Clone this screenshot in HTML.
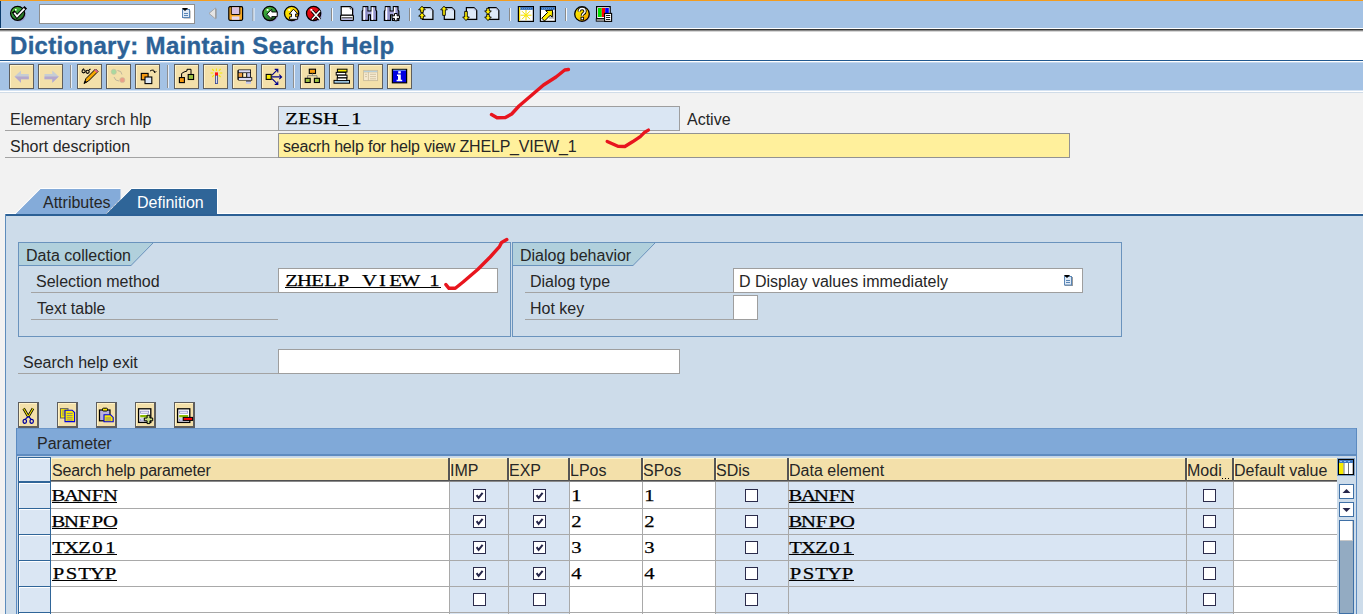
<!DOCTYPE html><html><head><meta charset="utf-8"><style>
*{margin:0;padding:0;box-sizing:border-box}
html,body{width:1363px;height:614px;overflow:hidden;background:#f2f2f2;position:relative}
.a{position:absolute}
.t{font:16px "Liberation Sans",sans-serif;line-height:20px;white-space:pre;color:#262626}
.ttl{font:bold 24px "Liberation Sans",sans-serif;line-height:30px;white-space:pre;color:#2c6297;letter-spacing:0.3px;-webkit-text-stroke:0.35px #2c6297}
.m{font:17.2px "Liberation Serif",serif;line-height:20px;white-space:pre;color:#000;-webkit-text-stroke:0.25px #000}
.m i{font-style:normal;display:inline-block;width:13px;text-align:center;transform:scaleX(1.2)}
</style></head><body><div class="a" style="left:0px;top:0px;width:1363px;height:1px;background:#f39c1e"></div>
<div class="a" style="left:0px;top:1px;width:1363px;height:27px;background:#a4c2e4"></div>
<div class="a" style="left:0px;top:1px;width:1px;height:28px;background:#0a3a6a"></div>
<div class="a" style="left:0px;top:28px;width:1363px;height:1px;background:#ffffff"></div>
<div class="a" style="left:0px;top:29px;width:1363px;height:1px;background:#333333"></div>
<div class="a" style="left:0px;top:30px;width:1363px;height:1px;background:#8a8a8a"></div>
<div class="a" style="left:0px;top:31px;width:1363px;height:1px;background:#d6d6d6"></div>
<div class="a" style="left:0px;top:32px;width:1363px;height:28px;background:#ffffff"></div>
<div class="a" style="left:39px;top:4px;width:156px;height:20px;background:#fff;border:1px solid #8f8f8f;"></div>
<div class="a ttl" style="left:10px;top:31px">Dictionary: Maintain Search Help</div>
<div class="a" style="left:0px;top:60px;width:1363px;height:1px;background:#22598f"></div>
<div class="a" style="left:0px;top:61px;width:1363px;height:1px;background:#ffffff"></div>
<div class="a" style="left:0px;top:62px;width:1363px;height:1px;background:#c2d6ee"></div>
<div class="a" style="left:0px;top:63px;width:1363px;height:27px;background:#a4c2e4"></div>
<div class="a" style="left:0px;top:90px;width:1363px;height:1px;background:#d4e2f2"></div>
<div class="a" style="left:0px;top:91px;width:1363px;height:1px;background:#ffffff"></div>
<div class="a" style="left:0px;top:92px;width:1363px;height:1px;background:#d0dce8"></div>
<div class="a" style="left:9px;top:64px;width:25px;height:25px;background:#f3e0aa;border:1px solid #5e5e5e;box-shadow:inset 1px 1px 0 #fff3c8"></div>
<div class="a" style="left:38px;top:64px;width:25px;height:25px;background:#f3e0aa;border:1px solid #5e5e5e;box-shadow:inset 1px 1px 0 #fff3c8"></div>
<div class="a" style="left:77px;top:64px;width:25px;height:25px;background:#f3e0aa;border:1px solid #5e5e5e;box-shadow:inset 1px 1px 0 #fff3c8"></div>
<div class="a" style="left:106px;top:64px;width:25px;height:25px;background:#f3e0aa;border:1px solid #5e5e5e;box-shadow:inset 1px 1px 0 #fff3c8"></div>
<div class="a" style="left:135px;top:64px;width:25px;height:25px;background:#f3e0aa;border:1px solid #5e5e5e;box-shadow:inset 1px 1px 0 #fff3c8"></div>
<div class="a" style="left:174px;top:64px;width:25px;height:25px;background:#f3e0aa;border:1px solid #5e5e5e;box-shadow:inset 1px 1px 0 #fff3c8"></div>
<div class="a" style="left:203px;top:64px;width:25px;height:25px;background:#f3e0aa;border:1px solid #5e5e5e;box-shadow:inset 1px 1px 0 #fff3c8"></div>
<div class="a" style="left:232px;top:64px;width:25px;height:25px;background:#f3e0aa;border:1px solid #5e5e5e;box-shadow:inset 1px 1px 0 #fff3c8"></div>
<div class="a" style="left:261px;top:64px;width:25px;height:25px;background:#f3e0aa;border:1px solid #5e5e5e;box-shadow:inset 1px 1px 0 #fff3c8"></div>
<div class="a" style="left:300px;top:64px;width:25px;height:25px;background:#f3e0aa;border:1px solid #5e5e5e;box-shadow:inset 1px 1px 0 #fff3c8"></div>
<div class="a" style="left:329px;top:64px;width:25px;height:25px;background:#f3e0aa;border:1px solid #5e5e5e;box-shadow:inset 1px 1px 0 #fff3c8"></div>
<div class="a" style="left:358px;top:64px;width:25px;height:25px;background:#f3e0aa;border:1px solid #5e5e5e;box-shadow:inset 1px 1px 0 #fff3c8"></div>
<div class="a" style="left:387px;top:64px;width:25px;height:25px;background:#f3e0aa;border:1px solid #5e5e5e;box-shadow:inset 1px 1px 0 #fff3c8"></div>
<div class="a" style="left:70px;top:65px;width:2px;height:23px;background:linear-gradient(90deg,#8e8e8e 50%,#e6eef8 50%)"></div>
<div class="a" style="left:167px;top:65px;width:2px;height:23px;background:linear-gradient(90deg,#8e8e8e 50%,#e6eef8 50%)"></div>
<div class="a" style="left:293px;top:65px;width:2px;height:23px;background:linear-gradient(90deg,#8e8e8e 50%,#e6eef8 50%)"></div>
<div class="a t" style="left:10px;top:110px;">Elementary srch hlp</div>
<div class="a" style="left:5px;top:130px;width:273px;height:1px;background:#a3a3a3"></div>
<div class="a" style="left:278px;top:106px;width:402px;height:25px;background:#dae6f3;border:1px solid #9e9e9e"></div>
<div class="a m" style="left:285px;top:109px;"><i>Z</i><i>E</i><i>S</i><i>H</i><i>_</i><i>1</i></div>
<div class="a t" style="left:687px;top:110px;">Active</div>
<div class="a t" style="left:10px;top:137px;">Short description</div>
<div class="a" style="left:5px;top:157px;width:273px;height:1px;background:#a3a3a3"></div>
<div class="a" style="left:278px;top:133px;width:792px;height:25px;background:#fff09c;border:1px solid #929292"></div>
<div class="a t" style="left:283px;top:137px;letter-spacing:-0.19px">seacrh help for help view ZHELP_VIEW_1</div>
<svg class="a" style="left:0;top:186px" width="230" height="30"><polygon points="15.5,28 40.5,3 120.5,3 120.5,28" fill="#84abd9"/><polyline points="14.8,28 40.2,2.5 120.5,2.5" fill="none" stroke="#fff" stroke-width="1"/><polygon points="106.5,28 131.5,3 217,3 217,28" fill="#2f6598"/><polyline points="106,28 131.2,2.5 217.5,2.5 217.5,28" fill="none" stroke="#fff" stroke-width="1"/><line x1="106" y1="28" x2="120.5" y2="13.5" stroke="#5a6f88" stroke-width="0.8" stroke-dasharray="1 1"/></svg>
<div class="a t" style="left:43px;top:193px;">Attributes</div>
<div class="a t" style="left:137px;top:193px;color:#fff">Definition</div>
<div class="a" style="left:5px;top:214px;width:1358px;height:400px;background:#cddcea"></div>
<div class="a" style="left:5px;top:213px;width:11px;height:1px;background:#fff"></div>
<div class="a" style="left:218px;top:213px;width:1145px;height:1px;background:#fff"></div>
<div class="a" style="left:5px;top:214px;width:1358px;height:2px;background:#2c6095"></div>
<div class="a" style="left:5px;top:214px;width:1px;height:400px;background:#5d8cbc"></div>
<div class="a" style="left:18px;top:242px;width:493px;height:95px;border:1px solid #6a93bd"></div>
<svg class="a" style="left:19px;top:243px" width="136" height="23"><polygon points="0,0 134,0 111.5,23 0,23" fill="#b1d0dc"/><line x1="0" y1="22.5" x2="112" y2="22.5" stroke="#6a93bd"/><line x1="111.5" y1="23" x2="134" y2="0" stroke="#6a93bd"/></svg>
<div class="a t" style="left:26px;top:246px;">Data collection</div>
<div class="a" style="left:512px;top:242px;width:610px;height:95px;border:1px solid #6a93bd"></div>
<svg class="a" style="left:513px;top:243px" width="144" height="23"><polygon points="0,0 142,0 119.5,23 0,23" fill="#b1d0dc"/><line x1="0" y1="22.5" x2="120" y2="22.5" stroke="#6a93bd"/><line x1="119.5" y1="23" x2="142" y2="0" stroke="#6a93bd"/></svg>
<div class="a t" style="left:520px;top:246px;">Dialog behavior</div>
<div class="a t" style="left:36px;top:272px;">Selection method</div>
<div class="a" style="left:31px;top:292px;width:247px;height:1px;background:#a3a3a3"></div>
<div class="a" style="left:278px;top:268px;width:220px;height:25px;background:#fff;border:1px solid #9e9e9e"></div>
<div class="a m" style="left:285px;top:271px;"><i>Z</i><i>H</i><i>E</i><i>L</i><i>P</i><i> </i><i>V</i><i>I</i><i>E</i><i>W</i><i> </i><i>1</i></div>
<div class="a" style="left:285px;top:287px;width:156px;height:1px;background:#000"></div>
<div class="a t" style="left:37px;top:299px;">Text table</div>
<div class="a" style="left:31px;top:319px;width:247px;height:1px;background:#a3a3a3"></div>
<div class="a t" style="left:530px;top:272px;">Dialog type</div>
<div class="a" style="left:525px;top:292px;width:208px;height:1px;background:#a3a3a3"></div>
<div class="a" style="left:733px;top:268px;width:350px;height:25px;background:#fff;border:1px solid #9e9e9e"></div>
<div class="a t" style="left:739px;top:272px;">D Display values immediately</div>
<div class="a t" style="left:530px;top:299px;">Hot key</div>
<div class="a" style="left:525px;top:319px;width:208px;height:1px;background:#a3a3a3"></div>
<div class="a" style="left:733px;top:295px;width:25px;height:25px;background:#fff;border:1px solid #9e9e9e"></div>
<div class="a t" style="left:23px;top:353px;">Search help exit</div>
<div class="a" style="left:18px;top:373px;width:260px;height:1px;background:#a3a3a3"></div>
<div class="a" style="left:278px;top:349px;width:402px;height:25px;background:#fff;border:1px solid #9e9e9e"></div>
<div class="a" style="left:18px;top:402px;width:21px;height:26px;background:#f3e0aa;border:1px solid #5e5e5e;border-right-width:2px;border-bottom-width:2px;box-shadow:inset 1px 1px 0 #fff3c8"></div>
<div class="a" style="left:57px;top:402px;width:21px;height:26px;background:#f3e0aa;border:1px solid #5e5e5e;border-right-width:2px;border-bottom-width:2px;box-shadow:inset 1px 1px 0 #fff3c8"></div>
<div class="a" style="left:96px;top:402px;width:21px;height:26px;background:#f3e0aa;border:1px solid #5e5e5e;border-right-width:2px;border-bottom-width:2px;box-shadow:inset 1px 1px 0 #fff3c8"></div>
<div class="a" style="left:135px;top:402px;width:21px;height:26px;background:#f3e0aa;border:1px solid #5e5e5e;border-right-width:2px;border-bottom-width:2px;box-shadow:inset 1px 1px 0 #fff3c8"></div>
<div class="a" style="left:174px;top:402px;width:21px;height:26px;background:#f3e0aa;border:1px solid #5e5e5e;border-right-width:2px;border-bottom-width:2px;box-shadow:inset 1px 1px 0 #fff3c8"></div>
<div class="a" style="left:16px;top:428px;width:1342px;height:186px;background:#cddcea"></div>
<div class="a" style="left:16px;top:428px;width:1px;height:186px;background:#5b8ac0"></div>
<div class="a" style="left:1356px;top:428px;width:1px;height:186px;background:#5b8ac0"></div>
<div class="a" style="left:17px;top:428px;width:1339px;height:27px;background:#80a9d8;border-top:1px solid #6b96c8;border-bottom:1px solid #5f8cc0"></div>
<div class="a" style="left:17px;top:455px;width:1339px;height:1px;background:#5f8cc0"></div>
<div class="a" style="left:17px;top:456px;width:1339px;height:1px;background:#c6d6e8"></div>
<div class="a t" style="left:37px;top:434px;">Parameter</div>
<div class="a" style="left:51px;top:458px;width:1286px;height:22px;background:#f3e0aa;box-shadow:inset 1px 1px 0 #fff6cc"></div>
<div class="a" style="left:51px;top:480px;width:1286px;height:1px;background:#505050"></div>
<div class="a" style="left:51px;top:481px;width:1286px;height:1px;background:#8a8a8a"></div>
<div class="a t" style="left:52px;top:461px;letter-spacing:-0.2px">Search help parameter</div>
<div class="a" style="left:448px;top:458px;width:2px;height:23px;background:#555555"></div>
<div class="a" style="left:450px;top:458px;width:1px;height:22px;background:#fff6cc"></div>
<div class="a t" style="left:450px;top:461px;">IMP</div>
<div class="a" style="left:507px;top:458px;width:2px;height:23px;background:#555555"></div>
<div class="a" style="left:509px;top:458px;width:1px;height:22px;background:#fff6cc"></div>
<div class="a t" style="left:509px;top:461px;">EXP</div>
<div class="a" style="left:568px;top:458px;width:2px;height:23px;background:#555555"></div>
<div class="a" style="left:570px;top:458px;width:1px;height:22px;background:#fff6cc"></div>
<div class="a t" style="left:570px;top:461px;">LPos</div>
<div class="a" style="left:641px;top:458px;width:2px;height:23px;background:#555555"></div>
<div class="a" style="left:643px;top:458px;width:1px;height:22px;background:#fff6cc"></div>
<div class="a t" style="left:643px;top:461px;">SPos</div>
<div class="a" style="left:714px;top:458px;width:2px;height:23px;background:#555555"></div>
<div class="a" style="left:716px;top:458px;width:1px;height:22px;background:#fff6cc"></div>
<div class="a t" style="left:716px;top:461px;">SDis</div>
<div class="a" style="left:787px;top:458px;width:2px;height:23px;background:#555555"></div>
<div class="a" style="left:789px;top:458px;width:1px;height:22px;background:#fff6cc"></div>
<div class="a t" style="left:789px;top:461px;">Data element</div>
<div class="a" style="left:1185px;top:458px;width:2px;height:23px;background:#555555"></div>
<div class="a" style="left:1187px;top:458px;width:1px;height:22px;background:#fff6cc"></div>
<div class="a t" style="left:1187px;top:461px;">Modi</div>
<div class="a" style="left:1232px;top:458px;width:2px;height:23px;background:#555555"></div>
<div class="a" style="left:1234px;top:458px;width:1px;height:22px;background:#fff6cc"></div>
<div class="a t" style="left:1234px;top:461px;">Default value</div>
<div class="a" style="left:1222px;top:478px;width:1px;height:1px;background:#000"></div>
<div class="a" style="left:1225px;top:478px;width:1px;height:1px;background:#000"></div>
<div class="a" style="left:1228px;top:478px;width:1px;height:1px;background:#000"></div>
<div class="a" style="left:18px;top:457px;width:33px;height:25px;background:#dae6f3;border:1px solid #2f6598;box-shadow:inset 1px 1px 0 #fff"></div>
<div class="a" style="left:51px;top:482px;width:398px;height:132px;background:#ffffff"></div>
<div class="a" style="left:449px;top:482px;width:59px;height:132px;background:#d9e5f3"></div>
<div class="a" style="left:449px;top:482px;width:1px;height:132px;background:#a9a9a9"></div>
<div class="a" style="left:508px;top:482px;width:61px;height:132px;background:#d9e5f3"></div>
<div class="a" style="left:508px;top:482px;width:1px;height:132px;background:#a9a9a9"></div>
<div class="a" style="left:569px;top:482px;width:73px;height:132px;background:#ffffff"></div>
<div class="a" style="left:569px;top:482px;width:1px;height:132px;background:#a9a9a9"></div>
<div class="a" style="left:642px;top:482px;width:73px;height:132px;background:#ffffff"></div>
<div class="a" style="left:642px;top:482px;width:1px;height:132px;background:#a9a9a9"></div>
<div class="a" style="left:715px;top:482px;width:73px;height:132px;background:#d9e5f3"></div>
<div class="a" style="left:715px;top:482px;width:1px;height:132px;background:#a9a9a9"></div>
<div class="a" style="left:788px;top:482px;width:398px;height:132px;background:#d9e5f3"></div>
<div class="a" style="left:788px;top:482px;width:1px;height:132px;background:#a9a9a9"></div>
<div class="a" style="left:1186px;top:482px;width:47px;height:132px;background:#d9e5f3"></div>
<div class="a" style="left:1186px;top:482px;width:1px;height:132px;background:#a9a9a9"></div>
<div class="a" style="left:1233px;top:482px;width:104px;height:132px;background:#ffffff"></div>
<div class="a" style="left:1233px;top:482px;width:1px;height:132px;background:#a9a9a9"></div>
<div class="a" style="left:51px;top:508px;width:1286px;height:1px;background:#a9a9a9"></div>
<div class="a" style="left:51px;top:534px;width:1286px;height:1px;background:#a9a9a9"></div>
<div class="a" style="left:51px;top:560px;width:1286px;height:1px;background:#a9a9a9"></div>
<div class="a" style="left:51px;top:586px;width:1286px;height:1px;background:#a9a9a9"></div>
<div class="a" style="left:51px;top:612px;width:1286px;height:1px;background:#a9a9a9"></div>
<div class="a" style="left:18px;top:482px;width:33px;height:27px;background:#dae6f3;border:1px solid #2f6598;box-shadow:inset 1px 1px 0 #fff"></div>
<div class="a m" style="left:52px;top:486px;"><i>B</i><i>A</i><i>N</i><i>F</i><i>N</i></div>
<div class="a" style="left:52px;top:502px;width:65px;height:1px;background:#000"></div>
<div class="a m" style="left:789px;top:486px;"><i>B</i><i>A</i><i>N</i><i>F</i><i>N</i></div>
<div class="a" style="left:789px;top:502px;width:65px;height:1px;background:#000"></div>
<div class="a m" style="left:570px;top:486px;"><i>1</i></div>
<div class="a m" style="left:643px;top:486px;"><i>1</i></div>
<div class="a" style="left:473px;top:489px;width:13px;height:13px;background:#fff;border:1px solid #2b2b4b"><svg width="11" height="11" style="position:absolute;left:0;top:0"><path d="M2.6 5.2 L4.6 7.8 L8.6 2.8" stroke="#26264a" stroke-width="2" fill="none"/></svg></div>
<div class="a" style="left:533px;top:489px;width:13px;height:13px;background:#fff;border:1px solid #2b2b4b"><svg width="11" height="11" style="position:absolute;left:0;top:0"><path d="M2.6 5.2 L4.6 7.8 L8.6 2.8" stroke="#26264a" stroke-width="2" fill="none"/></svg></div>
<div class="a" style="left:745px;top:489px;width:13px;height:13px;background:#fff;border:1px solid #2b2b4b"></div>
<div class="a" style="left:1203px;top:489px;width:13px;height:13px;background:#fff;border:1px solid #2b2b4b"></div>
<div class="a" style="left:18px;top:508px;width:33px;height:27px;background:#dae6f3;border:1px solid #2f6598;box-shadow:inset 1px 1px 0 #fff"></div>
<div class="a m" style="left:52px;top:512px;"><i>B</i><i>N</i><i>F</i><i>P</i><i>O</i></div>
<div class="a" style="left:52px;top:528px;width:65px;height:1px;background:#000"></div>
<div class="a m" style="left:789px;top:512px;"><i>B</i><i>N</i><i>F</i><i>P</i><i>O</i></div>
<div class="a" style="left:789px;top:528px;width:65px;height:1px;background:#000"></div>
<div class="a m" style="left:570px;top:512px;"><i>2</i></div>
<div class="a m" style="left:643px;top:512px;"><i>2</i></div>
<div class="a" style="left:473px;top:515px;width:13px;height:13px;background:#fff;border:1px solid #2b2b4b"><svg width="11" height="11" style="position:absolute;left:0;top:0"><path d="M2.6 5.2 L4.6 7.8 L8.6 2.8" stroke="#26264a" stroke-width="2" fill="none"/></svg></div>
<div class="a" style="left:533px;top:515px;width:13px;height:13px;background:#fff;border:1px solid #2b2b4b"><svg width="11" height="11" style="position:absolute;left:0;top:0"><path d="M2.6 5.2 L4.6 7.8 L8.6 2.8" stroke="#26264a" stroke-width="2" fill="none"/></svg></div>
<div class="a" style="left:745px;top:515px;width:13px;height:13px;background:#fff;border:1px solid #2b2b4b"></div>
<div class="a" style="left:1203px;top:515px;width:13px;height:13px;background:#fff;border:1px solid #2b2b4b"></div>
<div class="a" style="left:18px;top:534px;width:33px;height:27px;background:#dae6f3;border:1px solid #2f6598;box-shadow:inset 1px 1px 0 #fff"></div>
<div class="a m" style="left:52px;top:538px;"><i>T</i><i>X</i><i>Z</i><i>0</i><i>1</i></div>
<div class="a" style="left:52px;top:554px;width:65px;height:1px;background:#000"></div>
<div class="a m" style="left:789px;top:538px;"><i>T</i><i>X</i><i>Z</i><i>0</i><i>1</i></div>
<div class="a" style="left:789px;top:554px;width:65px;height:1px;background:#000"></div>
<div class="a m" style="left:570px;top:538px;"><i>3</i></div>
<div class="a m" style="left:643px;top:538px;"><i>3</i></div>
<div class="a" style="left:473px;top:541px;width:13px;height:13px;background:#fff;border:1px solid #2b2b4b"><svg width="11" height="11" style="position:absolute;left:0;top:0"><path d="M2.6 5.2 L4.6 7.8 L8.6 2.8" stroke="#26264a" stroke-width="2" fill="none"/></svg></div>
<div class="a" style="left:533px;top:541px;width:13px;height:13px;background:#fff;border:1px solid #2b2b4b"><svg width="11" height="11" style="position:absolute;left:0;top:0"><path d="M2.6 5.2 L4.6 7.8 L8.6 2.8" stroke="#26264a" stroke-width="2" fill="none"/></svg></div>
<div class="a" style="left:745px;top:541px;width:13px;height:13px;background:#fff;border:1px solid #2b2b4b"></div>
<div class="a" style="left:1203px;top:541px;width:13px;height:13px;background:#fff;border:1px solid #2b2b4b"></div>
<div class="a" style="left:18px;top:560px;width:33px;height:27px;background:#dae6f3;border:1px solid #2f6598;box-shadow:inset 1px 1px 0 #fff"></div>
<div class="a m" style="left:52px;top:564px;"><i>P</i><i>S</i><i>T</i><i>Y</i><i>P</i></div>
<div class="a" style="left:52px;top:580px;width:65px;height:1px;background:#000"></div>
<div class="a m" style="left:789px;top:564px;"><i>P</i><i>S</i><i>T</i><i>Y</i><i>P</i></div>
<div class="a" style="left:789px;top:580px;width:65px;height:1px;background:#000"></div>
<div class="a m" style="left:570px;top:564px;"><i>4</i></div>
<div class="a m" style="left:643px;top:564px;"><i>4</i></div>
<div class="a" style="left:473px;top:567px;width:13px;height:13px;background:#fff;border:1px solid #2b2b4b"><svg width="11" height="11" style="position:absolute;left:0;top:0"><path d="M2.6 5.2 L4.6 7.8 L8.6 2.8" stroke="#26264a" stroke-width="2" fill="none"/></svg></div>
<div class="a" style="left:533px;top:567px;width:13px;height:13px;background:#fff;border:1px solid #2b2b4b"><svg width="11" height="11" style="position:absolute;left:0;top:0"><path d="M2.6 5.2 L4.6 7.8 L8.6 2.8" stroke="#26264a" stroke-width="2" fill="none"/></svg></div>
<div class="a" style="left:745px;top:567px;width:13px;height:13px;background:#fff;border:1px solid #2b2b4b"></div>
<div class="a" style="left:1203px;top:567px;width:13px;height:13px;background:#fff;border:1px solid #2b2b4b"></div>
<div class="a" style="left:18px;top:586px;width:33px;height:27px;background:#dae6f3;border:1px solid #2f6598;box-shadow:inset 1px 1px 0 #fff"></div>
<div class="a" style="left:473px;top:593px;width:13px;height:13px;background:#fff;border:1px solid #2b2b4b"></div>
<div class="a" style="left:533px;top:593px;width:13px;height:13px;background:#fff;border:1px solid #2b2b4b"></div>
<div class="a" style="left:745px;top:593px;width:13px;height:13px;background:#fff;border:1px solid #2b2b4b"></div>
<div class="a" style="left:1203px;top:593px;width:13px;height:13px;background:#fff;border:1px solid #2b2b4b"></div>
<div class="a" style="left:18px;top:612px;width:33px;height:27px;background:#dae6f3;border:1px solid #2f6598;box-shadow:inset 1px 1px 0 #fff"></div>
<div class="a" style="left:473px;top:619px;width:13px;height:13px;background:#fff;border:1px solid #2b2b4b"></div>
<div class="a" style="left:533px;top:619px;width:13px;height:13px;background:#fff;border:1px solid #2b2b4b"></div>
<div class="a" style="left:745px;top:619px;width:13px;height:13px;background:#fff;border:1px solid #2b2b4b"></div>
<div class="a" style="left:1203px;top:619px;width:13px;height:13px;background:#fff;border:1px solid #2b2b4b"></div>
<div class="a" style="left:1337px;top:457px;width:19px;height:157px;background:#cddcea"></div>
<svg class="a" style="left:1337px;top:457px" width="19" height="20"><rect x="1.5" y="2.5" width="15" height="15" fill="#fff" stroke="#000" stroke-width="1"/><rect x="2" y="3" width="14" height="3" fill="#3f78c0"/><path d="M3 4.5h2M7 4.5h2M11 4.5h2" stroke="#a8d0ff" stroke-width="0.8"/><rect x="2" y="6" width="4.5" height="11" fill="#f5ea00"/><rect x="11" y="6" width="1" height="11" fill="#777"/><rect x="6.5" y="6" width="1" height="11" fill="#777"/><rect x="15" y="6" width="1" height="11" fill="#bbb"/><rect x="0.5" y="1.5" width="17" height="17" fill="none" stroke="#7a9cc4" stroke-width="1"/></svg>
<div class="a" style="left:1339px;top:484px;width:15px;height:15px;background:#fff;border:1px solid #3f70a6"></div>
<div class="a" style="left:1339px;top:502px;width:15px;height:15px;background:#fff;border:1px solid #3f70a6"></div>
<svg class="a" style="left:1339px;top:484px" width="15" height="33"><path d="M3.5 9 L7.5 5 L11.5 9 Z" fill="#26264a"/><path d="M3.5 24 L7.5 28 L11.5 24 Z" fill="#26264a"/></svg>
<div class="a" style="left:1339px;top:520px;width:15px;height:94px;background:#93abc2;border:1px solid #3f70a6"></div>
<div class="a" style="left:1340px;top:521px;width:13px;height:20px;background:#fff;border-bottom:1px solid #c8c8c8;border-right:1px solid #c8c8c8"></div>
<svg class="a" style="left:1060px;top:272px" width="16" height="16"><rect x="5" y="5" width="8" height="9" fill="#9a9a9a"/><rect x="4.5" y="4.5" width="7" height="8.5" fill="#dfeaf6" stroke="#5a86b6" stroke-width="1"/><path d="M6 8.5h4M6 10.5h4" stroke="#5a86b6" stroke-width="1"/><path d="M3.8 3 L10.2 3 L7 6 Z" fill="#000"/></svg>
<svg class="a" style="left:0;top:0" width="640" height="28" shape-rendering="geometricPrecision"><defs><linearGradient id="gG" x1="0" y1="0" x2="0.6" y2="1"><stop offset="0" stop-color="#5cc02a"/><stop offset="0.55" stop-color="#2f9a3a"/><stop offset="1" stop-color="#2a6e22"/></linearGradient><linearGradient id="gY" x1="0" y1="0" x2="1" y2="1"><stop offset="0" stop-color="#fff000"/><stop offset="0.5" stop-color="#f8d400"/><stop offset="1" stop-color="#f08a00"/></linearGradient><linearGradient id="gR" x1="0" y1="0" x2="1" y2="1"><stop offset="0" stop-color="#ff1010"/><stop offset="1" stop-color="#b80018"/></linearGradient><linearGradient id="gB" x1="0" y1="0" x2="1" y2="0"><stop offset="0" stop-color="#ffffff"/><stop offset="0.5" stop-color="#9e9ed6"/><stop offset="1" stop-color="#6a6aa0"/></linearGradient></defs><circle cx="19" cy="14.6" r="7" fill="#9c9cd2"/><circle cx="17.6" cy="13.3" r="7" fill="url(#gG)" stroke="#000" stroke-width="1.3"/><path d="M14.3 12.8 L17 16.4 L24.5 8.6" stroke="#000" stroke-width="3.6" fill="none" stroke-linecap="square"/><path d="M14.3 12.8 L17 16.4 L24.5 8.6" stroke="#fff" stroke-width="1.8" fill="none"/><rect x="15" y="9" width="1.6" height="1.6" fill="#fff"/><rect x="183.5" y="10.5" width="7" height="8" fill="#9a9a9a"/><rect x="182.5" y="9.5" width="7" height="8" fill="#dfeaf6" stroke="#5a86b6" stroke-width="1"/><path d="M184 13.5h4M184 15.5h4" stroke="#5a86b6" stroke-width="1"/><path d="M181.8 8 L188.2 8 L185 11 Z" fill="#000"/><path d="M210.5 13.5 L216.5 8.5 L216.5 18.8 Z" fill="#8a8a8a"/><path d="M209 13.4 L215.5 8 L215.5 18.9 Z" fill="#e4e4e4" stroke="#9a9a9a" stroke-width="0.8"/><rect x="228.8" y="6.7" width="13.8" height="13.6" rx="1.2" fill="#f5a623" stroke="#000" stroke-width="1.2"/><rect x="231.8" y="7.2" width="7.6" height="6.8" fill="#d8c2e2"/><rect x="231.8" y="16.4" width="7.6" height="3.4" fill="#e6d8ee"/><path d="M231.5 14.5h8.2M231.3 7v7.3M239.8 7v7.3" stroke="#000" stroke-width="0.9"/><rect x="252.5" y="8" width="1" height="13" fill="#8a8a8a"/><rect x="253.5" y="8" width="1" height="13" fill="#f4f8fc"/><rect x="331" y="8" width="1" height="13" fill="#8a8a8a"/><rect x="332" y="8" width="1" height="13" fill="#f4f8fc"/><rect x="409" y="8" width="1" height="13" fill="#8a8a8a"/><rect x="410" y="8" width="1" height="13" fill="#f4f8fc"/><rect x="509" y="8" width="1" height="13" fill="#8a8a8a"/><rect x="510" y="8" width="1" height="13" fill="#f4f8fc"/><rect x="565" y="8" width="1" height="13" fill="#8a8a8a"/><rect x="566" y="8" width="1" height="13" fill="#f4f8fc"/><circle cx="271.29999999999995" cy="14.8" r="7" fill="#9c9cd2"/><circle cx="269.9" cy="13.4" r="7.1" fill="url(#gG)" stroke="#000" stroke-width="1.3"/><rect x="266.7" y="9" width="1.8" height="1.8" fill="#fff"/><circle cx="293.0" cy="14.8" r="7" fill="#9c9cd2"/><circle cx="291.6" cy="13.4" r="7.1" fill="url(#gY)" stroke="#000" stroke-width="1.3"/><rect x="288.40000000000003" y="9" width="1.8" height="1.8" fill="#fff"/><circle cx="315.0" cy="14.8" r="7" fill="#9c9cd2"/><circle cx="313.6" cy="13.4" r="7.1" fill="url(#gR)" stroke="#000" stroke-width="1.3"/><rect x="310.40000000000003" y="9" width="1.8" height="1.8" fill="#fff"/><path d="M266.8 14.2 L271.8 9.3 L271.8 12 L277.2 12 L277.2 16.6 L271.8 16.6 L271.8 19.2 Z" fill="#fff" stroke="#000" stroke-width="0.9"/><path d="M293.5 9.2 L297.8 14 L295.6 14 L295.6 16.8 L297.6 16.8 L297.6 19.3 L289.6 19.3 L289.6 16.8 L291.5 16.8 L291.5 14 L289.3 14 Z" fill="#fff" stroke="#000" stroke-width="0.9"/><path d="M312 10.8 L320 19.5 M320 10.8 L312 19.5" stroke="#000" stroke-width="3.2"/><path d="M312 10.8 L320 19.5 M320 10.8 L312 19.5" stroke="#fff" stroke-width="1.6"/><rect x="342" y="7.5" width="12" height="14" fill="#9c9cd2" opacity="0.7"/><path d="M341.2 6.6 L350.5 6.6 L352.6 8.7 L352.6 15.5 L341.2 15.5 Z" fill="#fff" stroke="#000" stroke-width="1.2"/><path d="M350.2 6.8 L350.2 9 L352.4 9" fill="#cfd8f0" stroke="#000" stroke-width="0.6"/><rect x="340.6" y="15.2" width="12.8" height="5.2" rx="1" fill="#fff" stroke="#000" stroke-width="1.2"/><rect x="341.6" y="17.4" width="10.8" height="1.1" fill="#000"/><rect x="342" y="18.5" width="10" height="1.4" fill="#b8b8e6"/><path d="M363.2 6.6 h4.6 v4.4 h3.4 v-4.4 h4.6 v3.6 l0.8 1 v9.2 h-6.2 v-5.6 h-2 v5.6 h-6.2 v-9.2 l0.8 -1 z" fill="#a8a8dc" stroke="#000" stroke-width="1.2"/><rect x="363.4" y="7.2" width="1.5" height="12.8" fill="#fff"/><rect x="371.6" y="7.2" width="1.5" height="12.8" fill="#fff"/><rect x="366.3" y="7.2" width="1" height="12.8" fill="#7c7cb4"/><rect x="374.6" y="10.5" width="1" height="9.5" fill="#7c7cb4"/><path d="M385.4 6.6 h4.6 v4.4 h3.4 v-4.4 h4.6 v3.6 l0.8 1 v9.2 h-6.2 v-5.6 h-2 v5.6 h-6.2 v-9.2 l0.8 -1 z" fill="#a8a8dc" stroke="#000" stroke-width="1.2"/><rect x="385.59999999999997" y="7.2" width="1.5" height="12.8" fill="#fff"/><rect x="393.8" y="7.2" width="1.5" height="12.8" fill="#fff"/><rect x="388.5" y="7.2" width="1" height="12.8" fill="#7c7cb4"/><rect x="396.8" y="10.5" width="1" height="9.5" fill="#7c7cb4"/><path d="M394.5 13.5 h2.6 v2.3 h2.4 v2.6 h-2.4 v2.4 h-2.6 v-2.4 h-2.4 v-2.6 h2.4 z" fill="#fff" stroke="#000" stroke-width="1"/><path d="M423.6 8.5 h7.5 l2.6 2.6 v9.3 h-10.1 z" fill="#aaa" opacity="0.5"/><path d="M422.6 7.6 h7.5 l2.8 2.8 v9 h-10.3 z" fill="#dde9f7" stroke="#000" stroke-width="1.2"/><path d="M429.90000000000003 7.8 v2.8 h2.8 z" fill="#c0c6e8"/><path d="M445.3 8.5 h7.5 l2.6 2.6 v9.3 h-10.1 z" fill="#aaa" opacity="0.5"/><path d="M444.3 7.6 h7.5 l2.8 2.8 v9 h-10.3 z" fill="#dde9f7" stroke="#000" stroke-width="1.2"/><path d="M451.6 7.8 v2.8 h2.8 z" fill="#c0c6e8"/><path d="M467.4 8.5 h7.5 l2.6 2.6 v9.3 h-10.1 z" fill="#aaa" opacity="0.5"/><path d="M466.4 7.6 h7.5 l2.8 2.8 v9 h-10.3 z" fill="#dde9f7" stroke="#000" stroke-width="1.2"/><path d="M473.7 7.8 v2.8 h2.8 z" fill="#c0c6e8"/><path d="M489.5 8.5 h7.5 l2.6 2.6 v9.3 h-10.1 z" fill="#aaa" opacity="0.5"/><path d="M488.5 7.6 h7.5 l2.8 2.8 v9 h-10.3 z" fill="#dde9f7" stroke="#000" stroke-width="1.2"/><path d="M495.8 7.8 v2.8 h2.8 z" fill="#c0c6e8"/><path d="M422 6.2 l3.3 3.6 h-2 v2.6 h-2.6 v-2.6 h-2 z" fill="#ffee00" stroke="#000" stroke-width="0.9"/><path d="M422 12.6 l3.3 3.6 h-2 v2.6 h-2.6 v-2.6 h-2 z" fill="#ffee00" stroke="#000" stroke-width="0.9"/><path d="M444 6.2 l3.3 3.6 h-2 v5.6 h-2.6 v-5.6 h-2 z" fill="#ffee00" stroke="#000" stroke-width="0.9"/><path d="M466 20.6 l3.3 -3.6 h-2 v-5.6 h-2.6 v5.6 h-2 z" fill="#ffee00" stroke="#000" stroke-width="0.9"/><path d="M488 14.5 l3.3 -3.6 h-2 v-2.6 h-2.6 v2.6 h-2 z" fill="#ffee00" stroke="#000" stroke-width="0.9"/><path d="M488 20.6 l3.3 -3.6 h-2 v-2.6 h-2.6 v2.6 h-2 z" fill="#ffee00" stroke="#000" stroke-width="0.9"/><rect x="518.4" y="6.6" width="15" height="14.8" fill="#fff" stroke="#000" stroke-width="1.2"/><rect x="519.0" y="7.2" width="13.8" height="2.6" fill="#1f5fb0"/><path d="M519.9 8.5 h12" stroke="#9fc4ee" stroke-width="0.6" stroke-dasharray="1 1"/><rect x="519.0" y="7.2" width="1.2" height="13.6" fill="#ffe000"/><rect x="540.4" y="6.6" width="15" height="14.8" fill="#fff" stroke="#000" stroke-width="1.2"/><rect x="541.0" y="7.2" width="13.8" height="2.6" fill="#1f5fb0"/><path d="M541.9 8.5 h12" stroke="#9fc4ee" stroke-width="0.6" stroke-dasharray="1 1"/><g stroke="#f0dc00" stroke-width="1"><path d="M520.5 15.2 h11 M526 10 v10.4 M522 11.2 l8 8 M530 11.2 l-8 8"/></g><circle cx="526" cy="15.2" r="1.3" fill="#ffee00"/><rect x="549" y="12" width="5" height="7" fill="#c8c8c8"/><path d="M541.8 18.2 L547.6 12.4 L545.6 10.6 L552.6 10.2 L552.2 17.2 L550.3 15.2 L544.5 21 Z" fill="#ffee00" stroke="#000" stroke-width="1"/><circle cx="583" cy="15" r="7.2" fill="#9c9cd2"/><circle cx="582" cy="14" r="7.3" fill="url(#gY)" stroke="#000" stroke-width="1.3"/><path d="M579.2 11.6 q0 -3 2.9 -3 q3 0 3 2.7 q0 1.6 -1.9 2.5 q-0.9 0.5 -0.9 1.9" fill="none" stroke="#000" stroke-width="3.2"/><path d="M579.2 11.6 q0 -3 2.9 -3 q3 0 3 2.7 q0 1.6 -1.9 2.5 q-0.9 0.5 -0.9 1.9" fill="none" stroke="#fff" stroke-width="1.5"/><rect x="581" y="17.2" width="2.6" height="2.6" fill="#fff" stroke="#000" stroke-width="0.9"/><rect x="596.6" y="6.6" width="13.6" height="12" fill="#fff" stroke="#000" stroke-width="1.2"/><rect x="598" y="8" width="3.8" height="9" fill="#00e000"/><rect x="601.8" y="8" width="3.4" height="9" fill="#ff0000"/><rect x="605.2" y="8" width="3.6" height="6" fill="#0000ff"/><rect x="596.2" y="18.8" width="11" height="2.4" fill="#b0b0b0" stroke="#000" stroke-width="0.8"/><rect x="604.6" y="13.4" width="7" height="8" fill="#fff" stroke="#000" stroke-width="1.1"/><path d="M606 15.5h4.2M606 17.5h4.2M606 19.5h4.2" stroke="#000" stroke-width="0.9"/></svg>
<svg class="a" style="left:0;top:60px" width="420" height="32"><path d="M14.5 16.6 L21 10.5 L21 14 L28.8 14 L28.8 19.2 L21 19.2 L21 22.8 Z" fill="#c6cdd4"/><path d="M14.5 16.6 L28.8 16.6 L28.8 19.2 L21 19.2 L21 22.8 Z" fill="#b5a8cc"/><path d="M58.8 16.6 L52.3 10.5 L52.3 14 L44.5 14 L44.5 19.2 L52.3 19.2 L52.3 22.8 Z" fill="#c6cdd4"/><path d="M58.8 16.6 L44.5 16.6 L44.5 19.2 L52.3 19.2 L52.3 22.8 Z" fill="#b5a8cc"/><path d="M84 23.5 L86 18.5 L95.5 9 L98 11.5 L88.5 21 Z" fill="#f6a800" stroke="#000" stroke-width="1"/><path d="M94.2 10.3 L95.5 9 L98 11.5 L96.7 12.8 Z" fill="#e06090"/><path d="M84 23.5 L85.2 20.5 L87 22.3 Z" fill="#000"/><g fill="none" stroke="#000" stroke-width="1.1"><circle cx="83.6" cy="11.3" r="1.6"/><circle cx="87.6" cy="11.8" r="1.6"/><path d="M82.5 9.6 L84 8.6 M89 10 L90.5 9"/></g><circle cx="113.8" cy="11.8" r="2.6" fill="#a9d9a0" stroke="#c9c0a0" stroke-width="0.6"/><circle cx="122.3" cy="20" r="2.6" fill="#eaa088" stroke="#c9c0a0" stroke-width="0.6"/><path d="M117.5 10.5 q4 0 4.5 4 M119 21 q-4 0 -5 -4" fill="none" stroke="#b9b09a" stroke-width="0.9"/><rect x="141.3" y="13.4" width="6.8" height="6.4" fill="#f59a10" stroke="#000" stroke-width="1.1"/><rect x="145" y="17" width="6.8" height="6.6" fill="#dde9f7" stroke="#000" stroke-width="1.1"/><path d="M150 11 q4 -2.5 5 1.5 l1.2 -1.2 M155 12.5 l-1.5 -1" fill="none" stroke="#000" stroke-width="1"/><rect x="179.4" y="17.6" width="5" height="5" fill="#f59a10" stroke="#000" stroke-width="1.1"/><rect x="188.2" y="14.5" width="5.4" height="5" fill="#9ac040" stroke="#000" stroke-width="1.1"/><path d="M181.6 17.5 V13.5 L184 12 L187 11 L187 9.3 H191 V14.3" fill="none" stroke="#000" stroke-width="1"/><g stroke="#f5ea00" stroke-width="1.1"><path d="M216.4 8.5 v2.4 M216.4 15 v0 M210.5 13 h2.8 M219.5 13 h2.8 M212.2 9 l1.8 1.8 M220.6 9 l-1.8 1.8 M212.2 17 l1.8 -1.8 M220.6 17 l-1.8 -1.8"/></g><rect x="215.4" y="15" width="2.2" height="8.6" fill="#d8dcf0" stroke="#2f3f8f" stroke-width="0.8"/><rect x="215" y="12.4" width="3" height="3" fill="#ff1010"/><path d="M238.6 9.4 H251 V20.6 H238.6 L237.4 19.4 V10.6 Z" fill="#000"/><rect x="238.8" y="10.2" width="11.4" height="2.2" fill="#dcdcf4"/><rect x="238.6" y="13.1" width="3.6" height="3.8" fill="#f0a040"/><rect x="243.2" y="13.1" width="3" height="3.8" fill="#fff0c8"/><rect x="247.2" y="13.1" width="3" height="3.8" fill="#c8c8f0"/><rect x="251" y="17.2" width="1.2" height="3.4" fill="#000"/><rect x="238.8" y="17.8" width="12.6" height="2.2" fill="#dcdcf4"/><rect x="246" y="20.6" width="5" height="3.2" fill="#c4c8ec"/><rect x="246" y="20.6" width="5" height="0.8" fill="#000"/><rect x="266.2" y="14.4" width="5" height="5" fill="#f5ea00" stroke="#000" stroke-width="1.1"/><g fill="none" stroke="#00008a" stroke-width="1.1"><path d="M271.5 16.9 H281.5 M279.3 14.7 L281.6 16.9 L279.3 19.1 M272 15.2 L277.5 9.7 M274.7 9.4 H277.8 V12.4 M272 18.6 L277.5 24.1 M274.7 24.4 H277.8 V21.4"/></g><rect x="309.3" y="9.2" width="6.2" height="4.2" fill="#f59a10" stroke="#000" stroke-width="1.1"/><path d="M312.4 13.5 V15.7 M307.6 18.3 V15.7 H317 V18.3" fill="none" stroke="#808080" stroke-width="0.9"/><rect x="305.2" y="18.3" width="5" height="4.2" fill="#9ac040" stroke="#000" stroke-width="1.1"/><rect x="314.4" y="18.3" width="5" height="4.2" fill="#9ac040" stroke="#000" stroke-width="1.1"/><rect x="334" y="20.4" width="15.5" height="2.8" fill="#a8d4f0" stroke="#000" stroke-width="1"/><rect x="337.4" y="9.2" width="9.6" height="2.8" fill="#f5ea00" stroke="#000" stroke-width="1"/><rect x="336.2" y="12.4" width="9.6" height="2.6" fill="#fff" stroke="#000" stroke-width="1"/><rect x="337.4" y="15.2" width="9.6" height="2.6" fill="#fff" stroke="#000" stroke-width="1"/><rect x="337.2" y="18" width="9.6" height="2.6" fill="#fff" stroke="#000" stroke-width="1"/><rect x="363.6" y="10.4" width="14" height="10.2" fill="#f6ead0" stroke="#cbbd9a" stroke-width="0.9"/><path d="M364 12 h13.3 M368.4 10.5 v10 M365 14.3 h2 M365 16.6 h2 M370 14.3 h6 M370 16.6 h6 M370 18.8 h6" stroke="#c9bb9a" stroke-width="0.8"/><rect x="363.8" y="10.8" width="13.4" height="1.2" fill="#b8d0d8"/><rect x="392.4" y="9.4" width="14.2" height="13.4" fill="#0000e0" stroke="#000" stroke-width="1.2"/><path d="M393.2 10.2 h12.6" stroke="#a0d8ff" stroke-width="0.8"/><rect x="398.2" y="11.2" width="2.6" height="2.2" fill="#fff"/><path d="M397 14.5 h3.8 v5.2 h1.4 v1.6 h-5.6 v-1.6 h1.4 v-3.6 h-1 z" fill="#fff"/></svg>
<svg class="a" style="left:0;top:400px" width="200" height="30"><path d="M23.6 8.5 L28.3 16.5 M33 8.5 L28.3 16.5" stroke="#000" stroke-width="2.6" fill="none"/><path d="M23.6 8.5 L28.3 16.5 M33 8.5 L28.3 16.5" stroke="#f8e800" stroke-width="1.1" fill="none"/><path d="M28.3 16.5 L25.5 19 M28.3 16.5 L31 19" stroke="#0000a0" stroke-width="1.1"/><ellipse cx="24.8" cy="21.3" rx="1.7" ry="2" fill="none" stroke="#0000a0" stroke-width="1.2"/><ellipse cx="31.7" cy="21.3" rx="1.7" ry="2" fill="none" stroke="#0000a0" stroke-width="1.2"/><rect x="60.5" y="8.6" width="7.5" height="9.4" fill="#f8e800" stroke="#606060" stroke-width="1"/><path d="M62 11 h5 M62 13 h5 M62 15 h5" stroke="#7070a0" stroke-width="0.8"/><path d="M65 10.2 h7.2 l2.4 2.4 v9 h-9.6 z" fill="#f8e800" stroke="#0000e0" stroke-width="1.1"/><path d="M66.8 13.4 h5.8 M66.8 15.6 h5.8 M66.8 17.8 h5.8 M66.8 20 h5.8" stroke="#6a6aa0" stroke-width="0.8"/><rect x="99.5" y="10" width="10.5" height="10.8" fill="#b8b0e0" stroke="#000" stroke-width="1.2"/><rect x="102.5" y="8.2" width="5" height="2.8" rx="1" fill="#f8e800" stroke="#000" stroke-width="1"/><path d="M104 14.8 h6.6 l2.6 2.6 v4.4 h-9.2 z" fill="#f8e800" stroke="#0000e0" stroke-width="1.1"/><path d="M105.5 18 h5.5 M105.5 20 h5.5" stroke="#6a6aa0" stroke-width="0.8"/><rect x="138.6" y="8.8" width="12.2" height="13.6" fill="#fff" stroke="#000" stroke-width="1.3"/><rect x="140.6" y="11.2" width="8" height="2" fill="#fff" stroke="#8c8cc8" stroke-width="0.8"/><rect x="140.2" y="15" width="9" height="2.4" fill="#88b800"/><rect x="140.6" y="19" width="8" height="1.8" fill="#fff" stroke="#8c8cc8" stroke-width="0.8"/><rect x="177.6" y="8.8" width="12.2" height="13.6" fill="#fff" stroke="#000" stroke-width="1.3"/><rect x="179.6" y="11.2" width="8" height="2" fill="#fff" stroke="#8c8cc8" stroke-width="0.8"/><rect x="179.2" y="15" width="9" height="2.4" fill="#88b800"/><rect x="179.6" y="19" width="8" height="1.8" fill="#fff" stroke="#8c8cc8" stroke-width="0.8"/><path d="M147.1 15.2 h2.8 v2.8 h2.8 v2.8 h-2.8 v2.8 h-2.8 v-2.8 h-2.8 v-2.8 h2.8 z" fill="#c8e080" stroke="#000" stroke-width="1"/><rect x="183.2" y="17.4" width="9.4" height="3" fill="#ff0000" stroke="#000" stroke-width="1"/></svg>
<svg class="a" style="left:0;top:0" width="1363" height="614"><g fill="none" stroke="#e8151e" stroke-width="3.4" stroke-linecap="round" stroke-linejoin="round"><path d="M491.5,114.5 L497,117.7 L505.4,117.5 L511.7,114 L519,106 L543.5,85 L556,77 L564.7,70 L568.4,69.5"/><path d="M607.2,141.5 L617.9,146.2 L624.9,146.5 L632.5,141.8 L640.3,136.6 L644.5,132.4 L648.4,130.1"/><path d="M445.9,284.6 L449,288.3 L455.3,288.3 L463.1,282 L477.7,269.5 L490.2,257 L499.5,246.6 L501.6,242.4 L506.8,239.5"/></g></svg></body></html>
